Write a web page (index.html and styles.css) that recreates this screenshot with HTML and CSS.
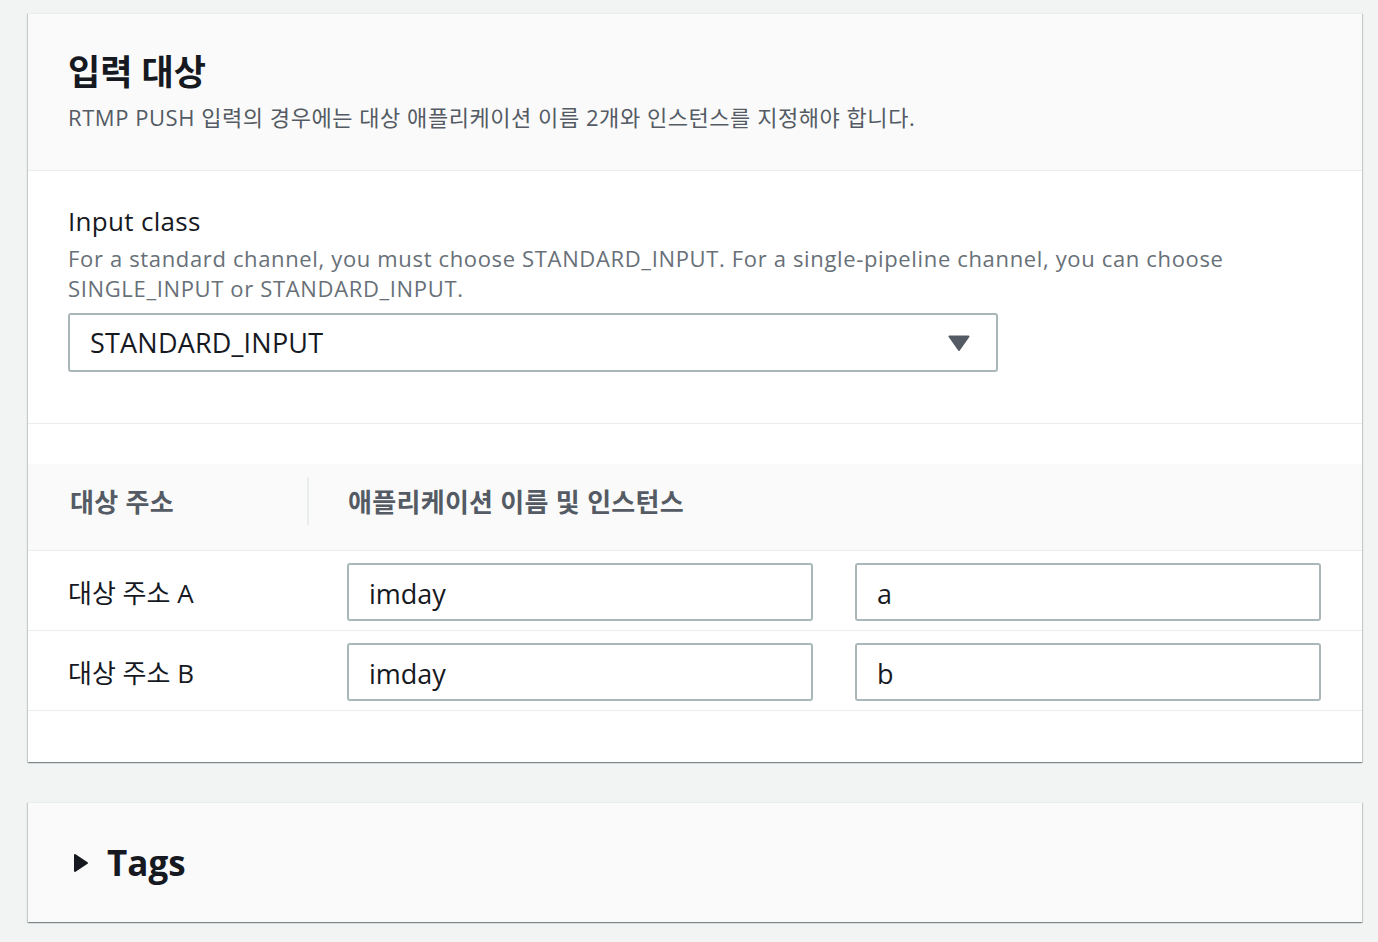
FILE: index.html
```html
<!DOCTYPE html>
<html lang="ko">
<head>
<meta charset="utf-8">
<title>입력 대상</title>
<link rel="stylesheet" href="styles.css">
</head>
<body>
<div class="page">
  <section class="card">
    <header class="card-header">
      <h2 class="title">입력 대상</h2>
      <p class="subtitle">RTMP PUSH 입력의 경우에는 대상 애플리케이션 이름 2개와 인스턴스를 지정해야 합니다.</p>
    </header>
    <div class="card-body">
      <div class="field-label">Input class</div>
      <div class="field-desc">For a standard channel, you must choose STANDARD_INPUT. For a single-pipeline channel, you can choose SINGLE_INPUT or STANDARD_INPUT.</div>
      <div class="select">
        <span class="select-value">STANDARD_INPUT</span>
        <svg class="caret" width="22" height="16" viewBox="0 0 22 16"><path d="M1.5 1.5 H20.5 L11 15 Z" fill="#545b64" stroke="#545b64" stroke-width="2" stroke-linejoin="round"/></svg>
      </div>
    </div>
    <div class="spacer"></div>
    <div class="table">
      <div class="thead">
        <div class="th th-first">대상 주소</div>
        <div class="th th-second"><span>애플리케이션 이름 및 인스턴스</span></div>
      </div>
      <div class="tr">
        <div class="td-label">대상 주소 A</div>
        <div class="td-inputs">
          <div class="input">imday</div>
          <div class="input">a</div>
        </div>
      </div>
      <div class="tr">
        <div class="td-label">대상 주소 B</div>
        <div class="td-inputs">
          <div class="input">imday</div>
          <div class="input">b</div>
        </div>
      </div>
    </div>
    <div class="card-footer-space"></div>
  </section>

  <section class="card card-tags">
    <div class="tags-header">
      <svg class="expand" width="16" height="20" viewBox="0 0 16 20"><path d="M2 2 L14 10 L2 18 Z" fill="#16191f" stroke="#16191f" stroke-width="2" stroke-linejoin="round"/></svg>
      <span class="tags-title">Tags</span>
    </div>
  </section>
</div>
</body>
</html>
```

FILE: styles.css
```css
* { box-sizing: border-box; }

html, body {
  margin: 0;
  padding: 0;
  background: #f2f3f3;
}

body {
  font-family: "Open Sans", "Noto Sans CJK KR", sans-serif;
  color: #16191f;
}

.page {
  padding: 13px 16px 20px 28px;
  display: flex;
  flex-direction: column;
  gap: 40px;
}

.card {
  background: #ffffff;
  border-top: 1px solid #eaeded;
  box-shadow: 0 1px 1px 0 rgba(0, 28, 36, 0.3), 1px 1px 1px 0 rgba(0, 28, 36, 0.15), -1px 1px 1px 0 rgba(0, 28, 36, 0.15);
}

.card-header {
  background: #fafafa;
  border-bottom: 1px solid #eaeded;
  padding: 36px 40px 38px 40px;
}

.title {
  margin: 0;
  font-size: 35px;
  line-height: 44px;
  font-weight: 700;
  color: #16191f;
}

.subtitle {
  margin: 8px 0 0 0;
  font-size: 22px;
  line-height: 30px;
  letter-spacing: 0.55px;
  color: #545b64;
}

.card-body {
  padding: 34px 40px 51px 40px;
  border-bottom: 1px solid #eaeded;
}

.field-label {
  font-size: 26px;
  line-height: 32px;
  letter-spacing: 0.3px;
  color: #16191f;
}

.field-desc {
  margin-top: 6px;
  font-size: 22px;
  line-height: 30px;
  letter-spacing: 0.65px;
  color: #687078;
  padding-right: 80px;
}

.select {
  margin-top: 10px;
  width: 930px;
  height: 59px;
  border: 2px solid #aab7b8;
  border-radius: 3px;
  display: flex;
  align-items: center;
  justify-content: space-between;
  padding: 0 26px 0 20px;
}

.select-value {
  font-size: 27px;
  letter-spacing: 0.2px;
  color: #16191f;
}

.spacer {
  height: 40px;
}

.thead {
  display: flex;
  align-items: center;
  height: 87px;
  padding-bottom: 12px;
  background: #fafafa;
  border-bottom: 1px solid #eaeded;
}

.th {
  font-size: 26px;
  font-weight: 700;
  color: #545b64;
  letter-spacing: 0.3px;
}

.th-first {
  width: 279px;
  padding-left: 42px;
}

.th-second {
  height: 48px;
  display: flex;
  align-items: center;
  border-left: 2px solid #eaeded;
  padding-left: 39px;
}

.tr {
  display: flex;
  align-items: center;
  padding: 12px 41px 9px 0;
  border-bottom: 1px solid #eaeded;
}

.td-label {
  width: 279px;
  padding-left: 40px;
  font-size: 26px;
  color: #16191f;
}

.td-inputs {
  flex: 1;
  padding-left: 40px;
  display: grid;
  grid-template-columns: 1fr 1fr;
  gap: 42px;
}

.input {
  height: 58px;
  border: 2px solid #aab7b8;
  border-radius: 3px;
  display: flex;
  align-items: center;
  padding: 2px 20px 0 20px;
  font-size: 27px;
  color: #16191f;
}

.card-footer-space {
  height: 51px;
}

.card-tags {
  background: #fafafa;
}

.tags-header {
  height: 119px;
  display: flex;
  align-items: center;
  gap: 18px;
  padding-left: 45px;
}

.tags-title {
  font-size: 35px;
  font-weight: 700;
  color: #16191f;
}
```
